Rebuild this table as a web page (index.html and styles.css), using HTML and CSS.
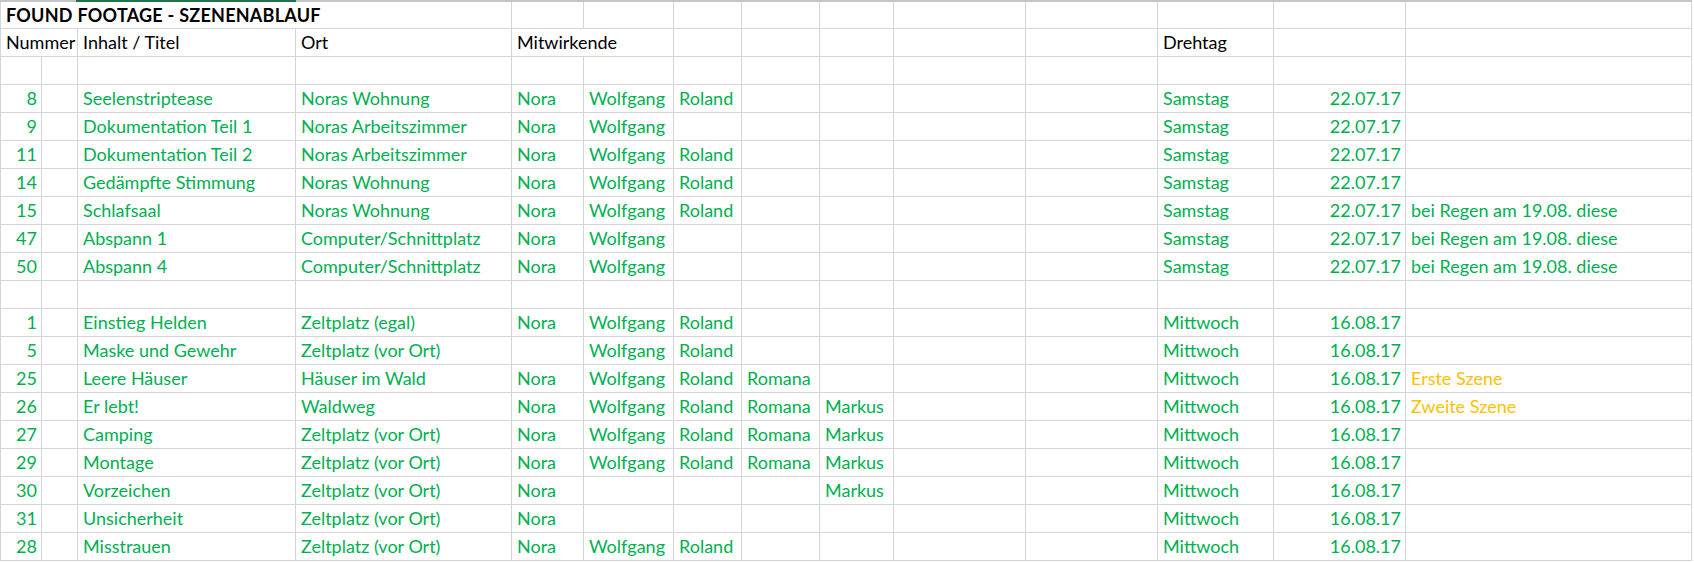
FILE: index.html
```html
<!DOCTYPE html>
<html lang="de">
<head>
<meta charset="utf-8">
<title>Found Footage - Szenenablauf</title>
<link rel="stylesheet" href="styles.css">
</head>
<body>
<div class="sheet">
  <div class="colbar"><span class="cb-a"></span><span class="cb-sel"></span><span class="cb-b"></span></div>
  <div class="grid">
    <div class="row first">
      <div class="c b s4">FOUND FOOTAGE - SZENENABLAUF</div>
      <div class="c"></div><div class="c"></div><div class="c"></div><div class="c"></div><div class="c"></div><div class="c"></div><div class="c"></div><div class="c"></div><div class="c"></div><div class="c"></div>
    </div>
    <div class="row">
      <div class="c s2">Nummer</div><div class="c">Inhalt / Titel</div><div class="c">Ort</div><div class="c s2">Mitwirkende</div><div class="c"></div><div class="c"></div><div class="c"></div><div class="c"></div><div class="c"></div><div class="c">Drehtag</div><div class="c"></div><div class="c"></div>
    </div>
    <div class="row">
      <div class="c"></div><div class="c"></div><div class="c"></div><div class="c"></div><div class="c"></div><div class="c"></div><div class="c"></div><div class="c"></div><div class="c"></div><div class="c"></div><div class="c"></div><div class="c"></div><div class="c"></div><div class="c"></div>
    </div>

    <div class="row g">
      <div class="c r">8</div><div class="c"></div><div class="c">Seelenstriptease</div><div class="c">Noras Wohnung</div><div class="c">Nora</div><div class="c">Wolfgang</div><div class="c">Roland</div><div class="c"></div><div class="c"></div><div class="c"></div><div class="c"></div><div class="c">Samstag</div><div class="c r">22.07.17</div><div class="c"></div>
    </div>
    <div class="row g">
      <div class="c r">9</div><div class="c"></div><div class="c">Dokumentation Teil 1</div><div class="c">Noras Arbeitszimmer</div><div class="c">Nora</div><div class="c">Wolfgang</div><div class="c"></div><div class="c"></div><div class="c"></div><div class="c"></div><div class="c"></div><div class="c">Samstag</div><div class="c r">22.07.17</div><div class="c"></div>
    </div>
    <div class="row g">
      <div class="c r">11</div><div class="c"></div><div class="c">Dokumentation Teil 2</div><div class="c">Noras Arbeitszimmer</div><div class="c">Nora</div><div class="c">Wolfgang</div><div class="c">Roland</div><div class="c"></div><div class="c"></div><div class="c"></div><div class="c"></div><div class="c">Samstag</div><div class="c r">22.07.17</div><div class="c"></div>
    </div>
    <div class="row g">
      <div class="c r">14</div><div class="c"></div><div class="c">Gedämpfte Stimmung</div><div class="c">Noras Wohnung</div><div class="c">Nora</div><div class="c">Wolfgang</div><div class="c">Roland</div><div class="c"></div><div class="c"></div><div class="c"></div><div class="c"></div><div class="c">Samstag</div><div class="c r">22.07.17</div><div class="c"></div>
    </div>
    <div class="row g">
      <div class="c r">15</div><div class="c"></div><div class="c">Schlafsaal</div><div class="c">Noras Wohnung</div><div class="c">Nora</div><div class="c">Wolfgang</div><div class="c">Roland</div><div class="c"></div><div class="c"></div><div class="c"></div><div class="c"></div><div class="c">Samstag</div><div class="c r">22.07.17</div><div class="c">bei Regen am 19.08. diese</div>
    </div>
    <div class="row g">
      <div class="c r">47</div><div class="c"></div><div class="c">Abspann 1</div><div class="c">Computer/Schnittplatz</div><div class="c">Nora</div><div class="c">Wolfgang</div><div class="c"></div><div class="c"></div><div class="c"></div><div class="c"></div><div class="c"></div><div class="c">Samstag</div><div class="c r">22.07.17</div><div class="c">bei Regen am 19.08. diese</div>
    </div>
    <div class="row g">
      <div class="c r">50</div><div class="c"></div><div class="c">Abspann 4</div><div class="c">Computer/Schnittplatz</div><div class="c">Nora</div><div class="c">Wolfgang</div><div class="c"></div><div class="c"></div><div class="c"></div><div class="c"></div><div class="c"></div><div class="c">Samstag</div><div class="c r">22.07.17</div><div class="c">bei Regen am 19.08. diese</div>
    </div>
    <div class="row">
      <div class="c"></div><div class="c"></div><div class="c"></div><div class="c"></div><div class="c"></div><div class="c"></div><div class="c"></div><div class="c"></div><div class="c"></div><div class="c"></div><div class="c"></div><div class="c"></div><div class="c"></div><div class="c"></div>
    </div>

    <div class="row g">
      <div class="c r">1</div><div class="c"></div><div class="c">Einstieg Helden</div><div class="c">Zeltplatz (egal)</div><div class="c">Nora</div><div class="c">Wolfgang</div><div class="c">Roland</div><div class="c"></div><div class="c"></div><div class="c"></div><div class="c"></div><div class="c">Mittwoch</div><div class="c r">16.08.17</div><div class="c"></div>
    </div>
    <div class="row g">
      <div class="c r">5</div><div class="c"></div><div class="c">Maske und Gewehr</div><div class="c">Zeltplatz (vor Ort)</div><div class="c"></div><div class="c">Wolfgang</div><div class="c">Roland</div><div class="c"></div><div class="c"></div><div class="c"></div><div class="c"></div><div class="c">Mittwoch</div><div class="c r">16.08.17</div><div class="c"></div>
    </div>
    <div class="row g">
      <div class="c r">25</div><div class="c"></div><div class="c">Leere Häuser</div><div class="c">Häuser im Wald</div><div class="c">Nora</div><div class="c">Wolfgang</div><div class="c">Roland</div><div class="c">Romana</div><div class="c"></div><div class="c"></div><div class="c"></div><div class="c">Mittwoch</div><div class="c r">16.08.17</div><div class="c o">Erste Szene</div>
    </div>
    <div class="row g">
      <div class="c r">26</div><div class="c"></div><div class="c">Er lebt!</div><div class="c">Waldweg</div><div class="c">Nora</div><div class="c">Wolfgang</div><div class="c">Roland</div><div class="c">Romana</div><div class="c">Markus</div><div class="c"></div><div class="c"></div><div class="c">Mittwoch</div><div class="c r">16.08.17</div><div class="c o">Zweite Szene</div>
    </div>
    <div class="row g">
      <div class="c r">27</div><div class="c"></div><div class="c">Camping</div><div class="c">Zeltplatz (vor Ort)</div><div class="c">Nora</div><div class="c">Wolfgang</div><div class="c">Roland</div><div class="c">Romana</div><div class="c">Markus</div><div class="c"></div><div class="c"></div><div class="c">Mittwoch</div><div class="c r">16.08.17</div><div class="c"></div>
    </div>
    <div class="row g">
      <div class="c r">29</div><div class="c"></div><div class="c">Montage</div><div class="c">Zeltplatz (vor Ort)</div><div class="c">Nora</div><div class="c">Wolfgang</div><div class="c">Roland</div><div class="c">Romana</div><div class="c">Markus</div><div class="c"></div><div class="c"></div><div class="c">Mittwoch</div><div class="c r">16.08.17</div><div class="c"></div>
    </div>
    <div class="row g">
      <div class="c r">30</div><div class="c"></div><div class="c">Vorzeichen</div><div class="c">Zeltplatz (vor Ort)</div><div class="c">Nora</div><div class="c"></div><div class="c"></div><div class="c"></div><div class="c">Markus</div><div class="c"></div><div class="c"></div><div class="c">Mittwoch</div><div class="c r">16.08.17</div><div class="c"></div>
    </div>
    <div class="row g">
      <div class="c r">31</div><div class="c"></div><div class="c">Unsicherheit</div><div class="c">Zeltplatz (vor Ort)</div><div class="c">Nora</div><div class="c"></div><div class="c"></div><div class="c"></div><div class="c"></div><div class="c"></div><div class="c"></div><div class="c">Mittwoch</div><div class="c r">16.08.17</div><div class="c"></div>
    </div>
    <div class="row g">
      <div class="c r">28</div><div class="c"></div><div class="c">Misstrauen</div><div class="c">Zeltplatz (vor Ort)</div><div class="c">Nora</div><div class="c">Wolfgang</div><div class="c">Roland</div><div class="c"></div><div class="c"></div><div class="c"></div><div class="c"></div><div class="c">Mittwoch</div><div class="c r">16.08.17</div><div class="c"></div>
    </div>
  </div>
</div>
</body>
</html>
```

FILE: styles.css
```css
* { box-sizing: border-box; }
html, body { margin: 0; padding: 0; background: #ffffff; }
body {
  font-family: Lato, "Open Sans", sans-serif;
  font-size: 18px;
  color: #000000;
}
.sheet { width: 1692px; }
.colbar { display: flex; height: 2px; }
.cb-a { flex: none; width: 76px; background: #c4c4c4; }
.cb-sel { flex: none; width: 220px; background: #217346; }
.cb-b { flex: 1 1 auto; background: #c4c4c4; }
.grid { border-left: 1px solid #d5d5d5; }
.row {
  display: grid;
  grid-template-columns: 41px 36px 218px 216px 72px 90px 68px 78px 74px 132px 132px 116px 132px 286px;
  height: 28px;
}
.row.first { height: 27px; }
.c {
  border-right: 1px solid #d5d5d5;
  border-bottom: 1px solid #d5d5d5;
  padding: 0 5px 0 5px;
  line-height: 27px;
  white-space: nowrap;
  overflow: hidden;
}
.row.first .c { line-height: 26px; }
.s2 { grid-column: span 2; }
.s4 { grid-column: span 4; }
.b { font-weight: 700; letter-spacing: 0.25px; }
.r { text-align: right; padding-right: 4px; }
.g .c { color: #00b050; }
.g .c.o { color: #ffc000; }
```
